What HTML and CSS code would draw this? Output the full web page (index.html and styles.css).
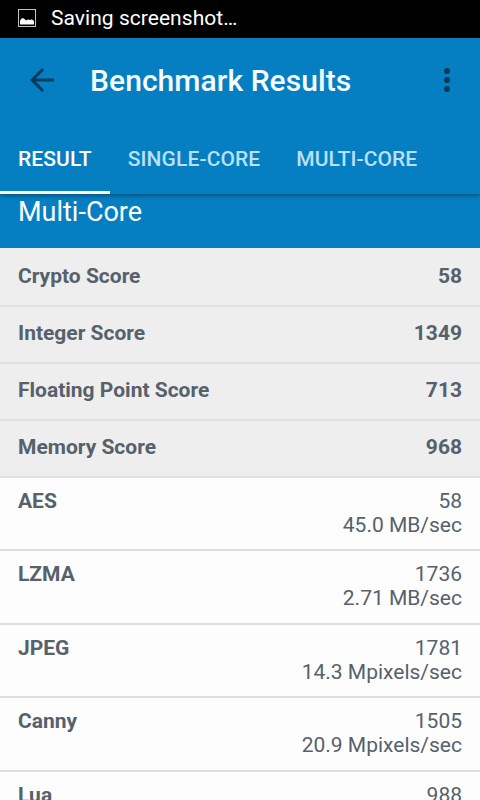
FILE: index.html
```html
<!DOCTYPE html>
<html lang="en">
<head>
  <meta charset="utf-8">
  <title>Benchmark Results</title>
  <link rel="stylesheet" href="styles.css">
</head>
<body>
  <div class="statusbar">
    <svg class="picture" width="18" height="18" viewBox="0 0 18 18">
      <rect x="0.5" y="0.5" width="17" height="17" fill="none" stroke="#c4c4c4"/>
      <path d="M2 15.5V12l1-2 2-1 2 1.5 1 1 2-1 2 .5 1-.5 1 0 2 1.500V15.500z" fill="#fff"/>
    </svg>
    <span>Saving screenshot…</span>
  </div>

  <header>
    <div class="toolbar">
      <svg class="back" width="24" height="24" viewBox="4 4 16 16">
        <path d="M20 11H7.830l5.590-5.590L12 4l-8 8 8 8 1.410-1.410L7.830 13H20v-2z" fill="#023c5a"/>
      </svg>
      <h1>Benchmark Results</h1>
      <svg class="more" width="6" height="24" viewBox="0 0 6 24" fill="#023c5a">
        <circle cx="3" cy="3" r="3"/>
        <circle cx="3" cy="12" r="3"/>
        <circle cx="3" cy="21" r="3"/>
      </svg>
    </div>
    <nav>
      <a class="tab active">RESULT</a>
      <a class="tab">SINGLE-CORE</a>
      <a class="tab">MULTI-CORE</a>
    </nav>
  </header>

  <main>
    <h2>Multi-Core</h2>
    <ul class="scores">
      <li><b>Crypto Score</b><b>58</b></li>
      <li><b>Integer Score</b><b>1349</b></li>
      <li><b>Floating Point Score</b><b>713</b></li>
      <li><b>Memory Score</b><b>968</b></li>
    </ul>
    <ul class="tests">
      <li><b>AES</b><p>58<br>45.0 MB/sec</p></li>
      <li><b>LZMA</b><p>1736<br>2.71 MB/sec</p></li>
      <li><b>JPEG</b><p>1781<br>14.3 Mpixels/sec</p></li>
      <li><b>Canny</b><p>1505<br>20.9 Mpixels/sec</p></li>
      <li><b>Lua</b><p>988</p></li>
    </ul>
  </main>
</body>
</html>
```

FILE: styles.css
```css
*{
  box-sizing: border-box;
  padding: 0;
  margin: 0;
}

body{
  height: 800px;
  overflow: hidden;
  background-color: #fdfdfd;
  color: #56616b;
  font-family: Roboto, sans-serif;
  font-size: 21px;
  line-height: 24px;
}

ul{
  list-style: none;
}

.statusbar{
  display: flex;
  align-items: center;
  height: 38px;
  padding: 0 18px 2px;
  background-color: #000;
  color: #fff;
  letter-spacing: 0.04px;
}
.picture{
  margin-right: 15px;
}

header{
  position: relative;
  height: 156px;
  background-color: #057fc1;
  box-shadow: 0 1px 5px rgba(0,0,0,0.45);
}

.toolbar{
  display: flex;
  align-items: center;
  height: 84px;
  padding: 0 30px;
}
.toolbar h1{
  flex: 1;
  margin-left: 36px;
  padding-top: 2px;
  color: #f5fbff;
  font-size: 30px;
  font-weight: 500;
  line-height: 36px;
  letter-spacing: 0.06px;
}

nav{
  display: flex;
  height: 72px;
}
.tab{
  padding: 25px 18px 0;
  border-bottom: 3px solid transparent;
  color: #b9e0f7;
  font-weight: 500;
  letter-spacing: 0.1px;
}
.tab.active{
  color: #fff;
  border-color: #fff;
}

h2{
  height: 54px;
  padding: 2px 18px 0;
  background-color: #057fc1;
  color: #fff;
  font-size: 27px;
  font-weight: 400;
  line-height: 32px;
}

li{
  display: flex;
  justify-content: space-between;
  padding: 0 18px;
  border-bottom: 2px solid #dfdfdf;
}

.scores{
  padding-top: 2px;
  background-color: #eee;
}
.scores li{
  height: 57px;
  padding-top: 14px;
}

.tests li{
  height: 73px;
  padding-top: 11px;
}
.tests li:nth-child(even){
  height: 74px;
}
.tests p{
  text-align: right;
}
```
